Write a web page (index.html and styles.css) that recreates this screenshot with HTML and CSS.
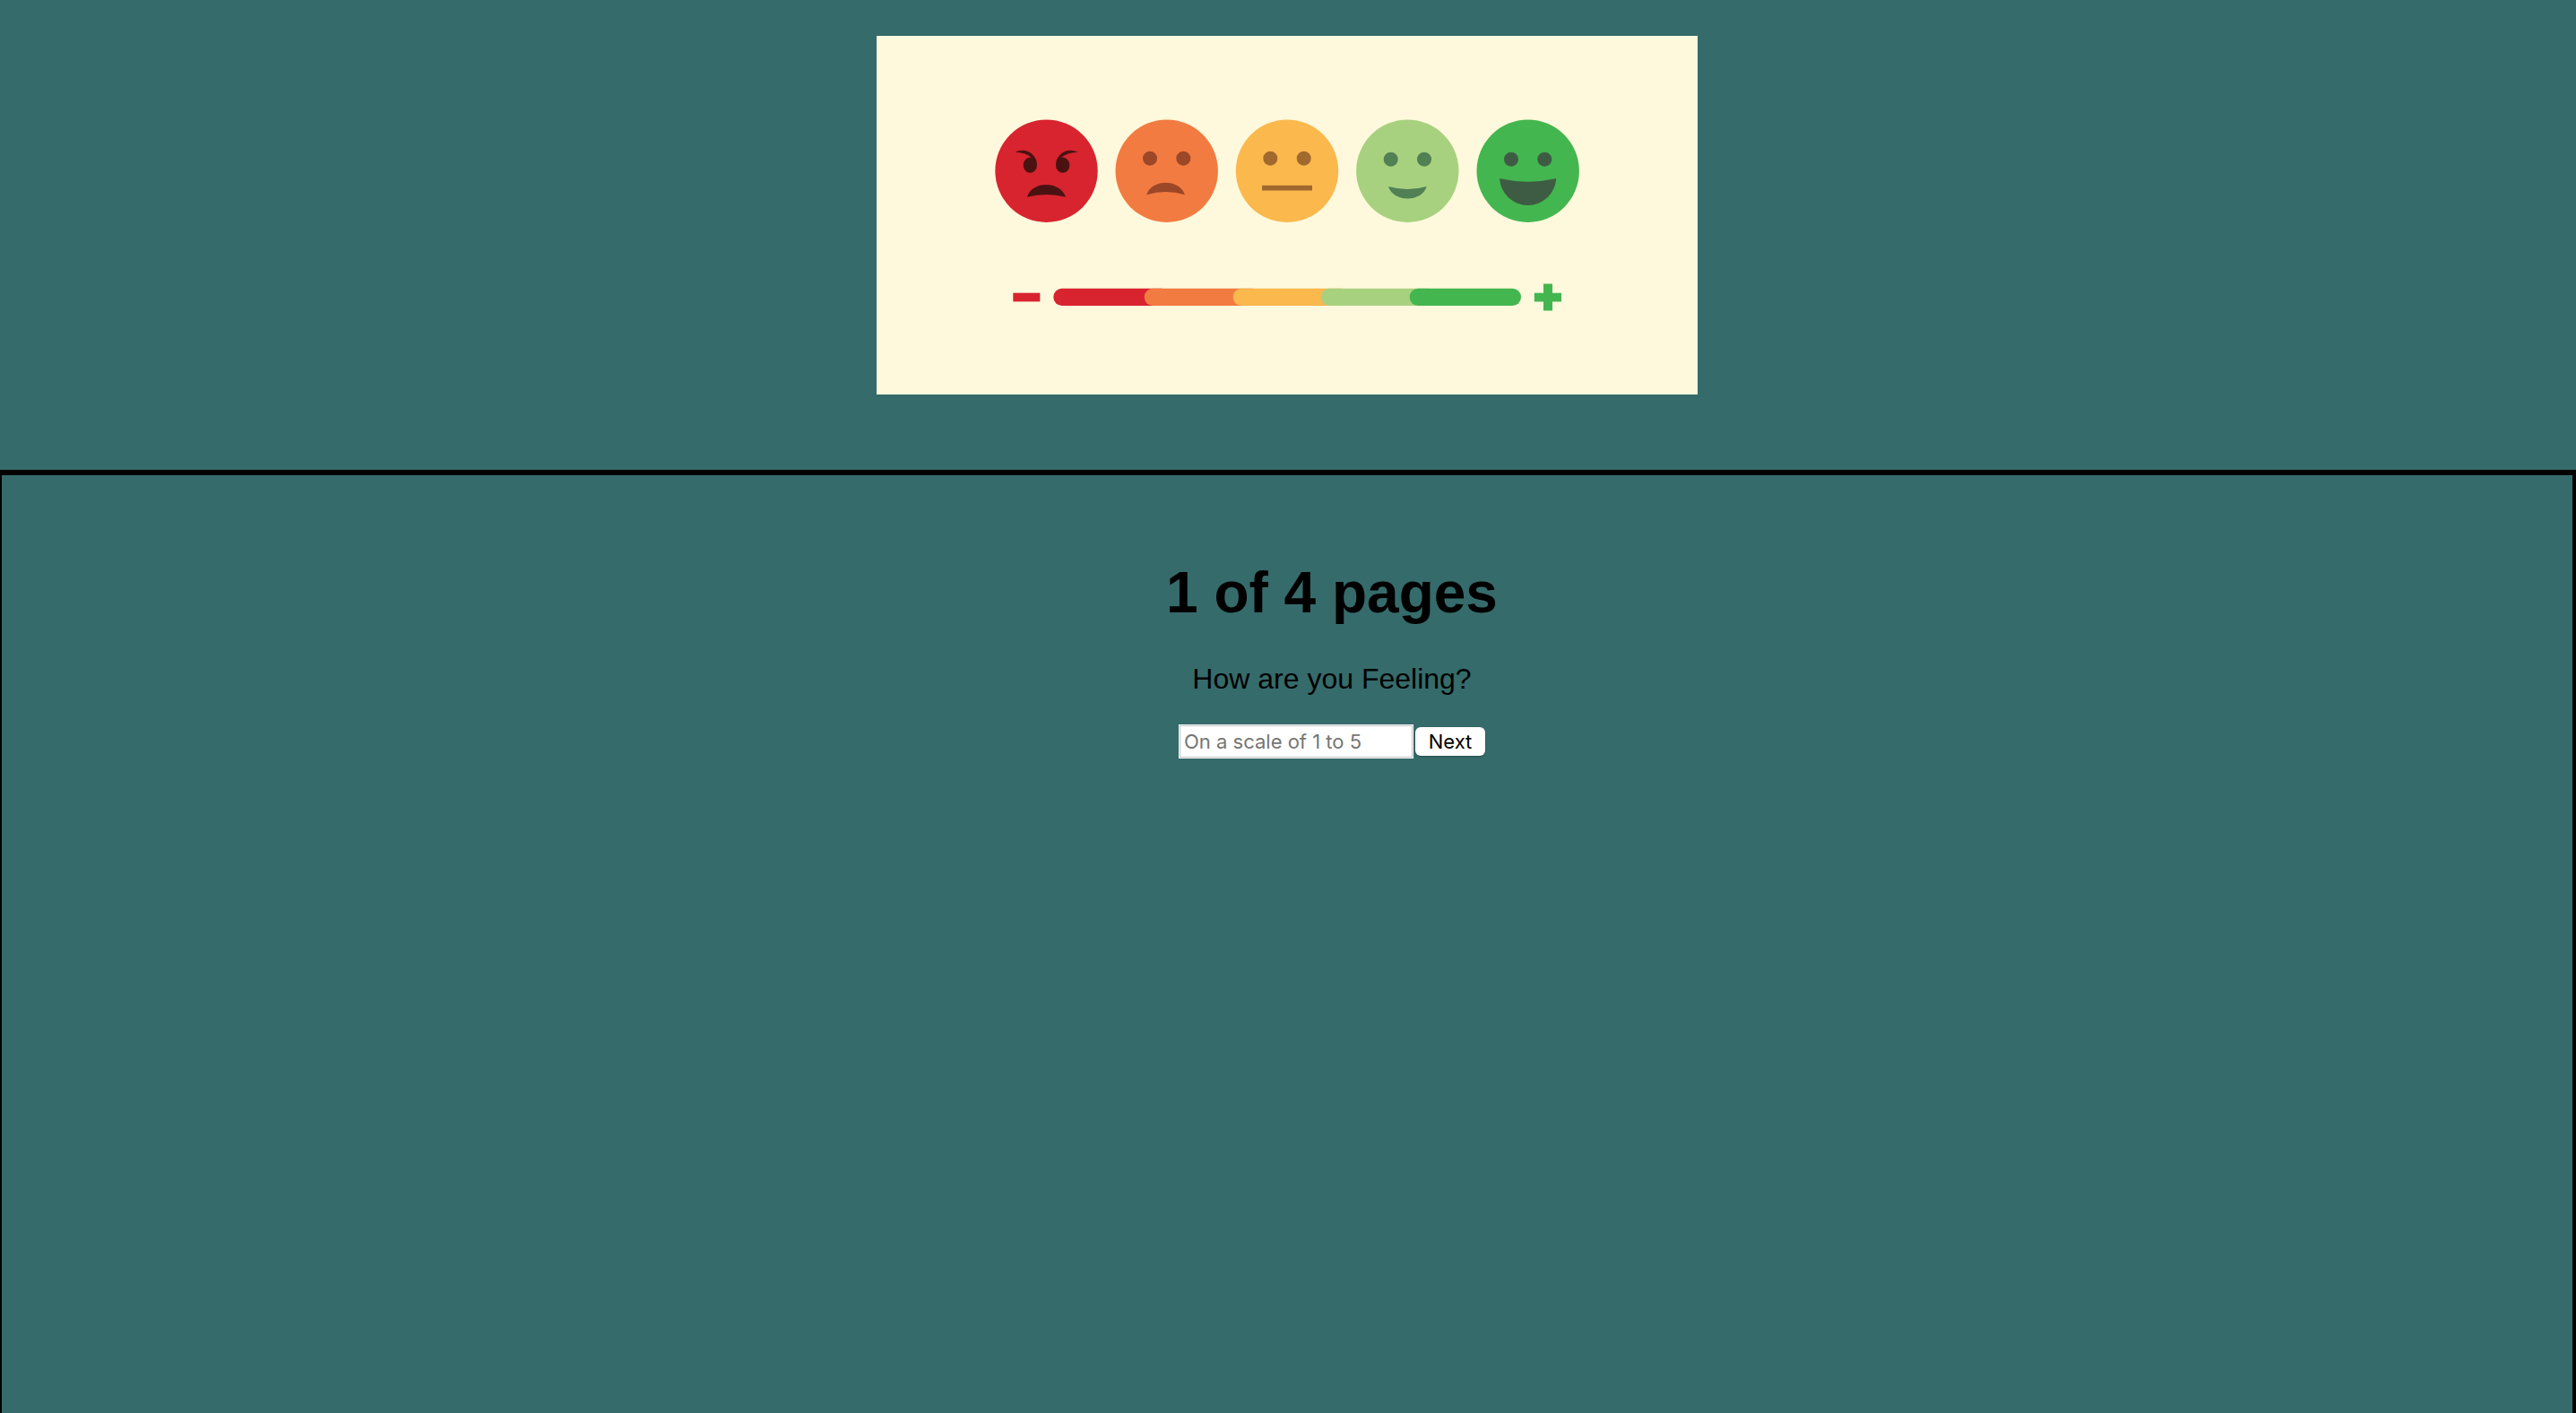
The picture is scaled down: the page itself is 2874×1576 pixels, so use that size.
FILE: index.html
```html
<!DOCTYPE html>
<html lang="en">
<head>
<meta charset="utf-8">
<title>How are you Feeling?</title>
<link rel="stylesheet" href="styles.css">
</head>
<body>
<header class="banner">
  <svg class="scale" viewBox="0 0 916 400" role="img" aria-label="Mood scale from angry to happy">
    <rect width="916" height="400" fill="#fef9dc"/>
    <!-- angry -->
    <circle cx="189.5" cy="150.7" r="57.2" fill="#d8242f"/>
    <g fill="#4b1212">
      <g transform="translate(122 80) scale(.33333)">
        <path id="brow" d="M97 150C118 139 142 142 157 158C168 169 171 180 171 193A23 26 0 1 1 152 167C140 156 120 149 97 150Z"/>
        <use href="#brow" transform="translate(405 0) scale(-1 1)"/>
      </g>
      <path d="M168 179.7C173 161.5 205 161.5 211 179.7Q189.5 174.300 168 179.7Z"/>
    </g>
    <!-- sad -->
    <circle cx="323.7" cy="150.7" r="57.2" fill="#f27b41"/>
    <g fill="#9b4728">
      <circle cx="305" cy="136.7" r="8"/>
      <circle cx="342.3" cy="136.7" r="8"/>
      <path d="M301.3 177.200C307 159.300 338 159.300 344 177.200Q322.700 171 301.300 177.200Z"/>
    </g>
    <!-- neutral -->
    <circle cx="458" cy="150.7" r="57.2" fill="#fbb84d"/>
    <g fill="#a0692e">
      <circle cx="439.3" cy="136.7" r="8"/>
      <circle cx="476.7" cy="136.7" r="8"/>
      <rect x="430" y="166.800" width="56" height="5.700"/>
    </g>
    <!-- content -->
    <circle cx="592.3" cy="150.7" r="57.2" fill="#a8d17f"/>
    <g fill="#508054">
      <circle cx="573.7" cy="137.700" r="8"/>
      <circle cx="611" cy="137.700" r="8"/>
      <path d="M571 168C577 186 608 186 613.700 168Q592.300 174 571 168Z"/>
    </g>
    <!-- happy -->
    <circle cx="726.7" cy="150.7" r="57.2" fill="#44b650"/>
    <g fill="#3e5c43">
      <circle cx="708" cy="137.700" r="8"/>
      <circle cx="745.3" cy="137.700" r="8"/>
      <path d="M695 159A31.700 31.700 0 0 0 758.300 159Q726.700 166.300 695 159Z"/>
    </g>
    <!-- scale bar, each colour overlapping the one before -->
    <rect x="152.3" y="286.7" width="30" height="9.7" fill="#d8242f"/>
    <rect x="197.3" y="281.800" width="130" height="19.200" rx="9.600" fill="#d8242f"/>
    <rect x="298.7" y="281.800" width="130" height="19.200" rx="9.600" fill="#f27b41"/>
    <rect x="397.7" y="281.800" width="130" height="19.200" rx="9.600" fill="#fbb84d"/>
    <rect x="495.7" y="281.800" width="130" height="19.200" rx="9.600" fill="#a8d17f"/>
    <rect x="594.7" y="281.800" width="124.300" height="19.200" rx="9.600" fill="#44b650"/>
    <path fill="#44b650" d="M744 276.500h10v10.200h10v9.700h-10v10.200h-10v-10.200h-10.200v-9.700h10.200z"/>
  </svg>
</header>
<main class="panel">
  <h1 class="title">1 of 4 pages</h1>
  <label class="question" for="feeling">How are you Feeling?</label>
  <form class="answer">
    <input class="field" id="feeling" type="text" placeholder="On a scale of 1 to 5">
    <button class="next" type="button">Next</button>
  </form>
</main>
</body>
</html>
```
FILE: styles.css
```css
* {
  box-sizing: border-box;
}

body {
  display: flex;
  flex-direction: column;
  min-height: 100vh;
  margin: 0;
  background: #366b6b;
  color: #000;
  font-family: "Liberation Sans", Arial, sans-serif;
}

.banner {
  display: flex;
  justify-content: center;
  padding: 40px 2px 84px 0;
}

.scale {
  display: block;
  width: 916px;
  max-width: 100%;
}

.panel {
  display: flex;
  flex: 1;
  flex-direction: column;
  align-items: center;
  padding: 94px 0 40px 100px;
  border: solid #000;
  border-width: 6px 4px 0 2px;
}

.title {
  margin: 0 0 40px;
  font-size: 64px;
  line-height: 74px;
}

.question {
  margin-bottom: 32px;
  font-size: 32px;
  line-height: 38px;
}

.answer {
  display: flex;
  align-items: center;
  gap: 2px;
}

.field,
.next {
  font-family: Inter, sans-serif;
  font-size: 22px;
  line-height: 28px;
}

.field {
  width: 262px;
  height: 38px;
  padding: 2px 5px;
  border: 1px solid #fff;
  border-radius: 0;
  outline: 1px solid #c0c0c0;
  outline-offset: -2px;
  background: #fff;
}

.field::placeholder {
  color: #757575;
  opacity: 1;
}

.next {
  width: 78px;
  height: 32px;
  padding: 0;
  border: 0;
  border-radius: 6px;
  background: #fff;
  box-shadow: 0 1px 2px rgba(0, 0, 0, 0.3);
  color: #000;
}
```
